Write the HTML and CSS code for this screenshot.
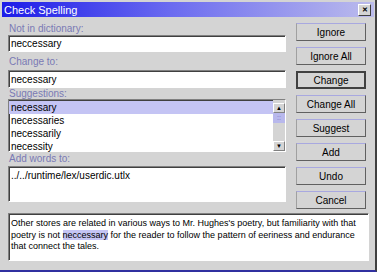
FILE: index.html
```html
<!DOCTYPE html>
<html lang="en">
<head>
    <meta charset="UTF-8">
    <title>Check Spelling</title>
    <link rel="stylesheet" href="styles.css">
</head>
<body>
    <div class="window">
        <div class="titlebar">
            <span class="title">Check Spelling</span>
            <span class="close">&#x2715;</span>
        </div>
        <div class="content">
            <div class="fields">
                <label class="l1">Not in dictionary:</label>
                <div class="field f1">neccessary</div>
                <label class="l2">Change to:</label>
                <div class="field f2">necessary</div>
                <label class="l3">Suggestions:</label>
                <div class="list">
                    <div class="rows">
                        <div class="row selected">necessary</div>
                        <div class="row">necessaries</div>
                        <div class="row">necessarily</div>
                        <div class="row">necessity</div>
                    </div>
                    <div class="scrollbar">
                        <div class="arrow">&#9650;</div>
                        <div class="thumb">::</div>
                        <div class="track"></div>
                        <div class="arrow">&#9660;</div>
                    </div>
                </div>
                <label class="l4">Add words to:</label>
                <div class="field tall">../../runtime/lex/userdic.utlx</div>
            </div>
            <div class="buttons">
                <button>Ignore</button>
                <button>Ignore All</button>
                <button class="default">Change</button>
                <button>Change All</button>
                <button>Suggest</button>
                <button>Add</button>
                <button>Undo</button>
                <button>Cancel</button>
            </div>
        </div>
        <div class="preview">
            Other stores are related in various ways to Mr. Hughes's poetry, but familiarity with that
            poetry is not <span class="hl">neccessary</span> for the reader to follow the pattern of eeriness and endurance
            that connect the tales.
        </div>
    </div>
</body>
</html>
```
FILE: styles.css
```css
body {
    margin: 0;
    background: #d4d4d4;
    font-family: "Liberation Sans", Arial, sans-serif;
    font-size: 10px;
    color: #000;
}
.window {
    width: 373px;
    height: 268px;
    overflow: hidden;
    padding: 2px 0 0 2px;
    border-right: 2px solid #404040;
    border-bottom: 2px solid #3030a0;
    background: #d4d4d4;
}
.titlebar {
    height: 15px;
    margin-right: 1px;
    display: flex;
    align-items: center;
    justify-content: space-between;
    background: linear-gradient(to right, #1c1ce8, #6a6af0 45%, #bcbcec);
    color: #fff;
    padding: 0 3px 0 2px;
    font-size: 11px;
}
.close {
    width: 11px;
    height: 10px;
    background: #d4d4d4;
    color: #000;
    font-size: 7px;
    font-weight: bold;
    line-height: 10px;
    text-align: center;
    border: 1px solid;
    border-color: #fff #404040 #404040 #fff;
}
.content {
    display: flex;
    padding: 5px 0 0 6px;
}
.fields {
    width: 278px;
    display: flex;
    flex-direction: column;
}
label {
    color: #7a7ab4;
    padding-left: 1px;
}
.l1 {
    height: 13px;
    line-height: 13px;
}
.l2 {
    height: 15px;
    line-height: 14px;
    padding-top: 3px;
}
.l3 {
    height: 11px;
    line-height: 11px;
}
.l4 {
    height: 14px;
    line-height: 14px;
}
.field {
    background: #fff;
    padding-left: 2px;
    border: 1px solid;
    border-color: #808080 #fff #fff #808080;
    box-shadow: inset 1px 1px 0 #404040;
}
.f1 {
    height: 15px;
    line-height: 16px;
}
.f2 {
    height: 16px;
    line-height: 17px;
}
.field.tall {
    height: 34px;
    line-height: 18px;
}
.list {
    display: flex;
    height: 51px;
    background: #fff;
    border: 1px solid;
    border-color: #808080 #fff #fff #808080;
    box-shadow: inset 1px 1px 0 #404040;
}
.rows {
    flex: 1;
    padding-top: 1px;
}
.row {
    height: 13px;
    line-height: 13px;
    padding-left: 2px;
}
.row.selected {
    background: #c4c4f4;
}
.scrollbar {
    width: 12px;
    display: flex;
    flex-direction: column;
    background: #d4d4d4;
    padding-top: 3px;
}
.arrow {
    height: 10px;
    font-size: 6px;
    line-height: 9px;
    text-align: center;
    background: #d4d4d4;
    border: 1px solid;
    border-color: #fff #808080 #808080 #fff;
    box-sizing: border-box;
}
.thumb {
    height: 10px;
    background: #b8b8ec;
    color: #7070c0;
    font-size: 7px;
    text-align: center;
    line-height: 9px;
}
.track {
    flex: 1;
}
.buttons {
    display: flex;
    flex-direction: column;
    gap: 6px;
    margin-left: 10px;
    padding-top: 1px;
}
button {
    width: 70px;
    height: 18px;
    padding: 0;
    font-family: inherit;
    font-size: 10px;
    color: #000;
    background: #d4d4d4;
    border: 1px solid;
    border-color: #a8a8e0 #606060 #606060 #a0a0a0;
}
button.default {
    border: 2px solid;
    border-color: #404040;
}
.preview {
    margin: 4px 6px 0 6px;
    height: 42px;
    background: #fff;
    padding: 4px 1px 0 2px;
    font-size: 9px;
    line-height: 11.5px;
    border: 1px solid;
    border-color: #808080 #fff #fff #808080;
    box-shadow: inset 1px 1px 0 #404040;
}
.hl {
    background: #c4c4f4;
}
```
